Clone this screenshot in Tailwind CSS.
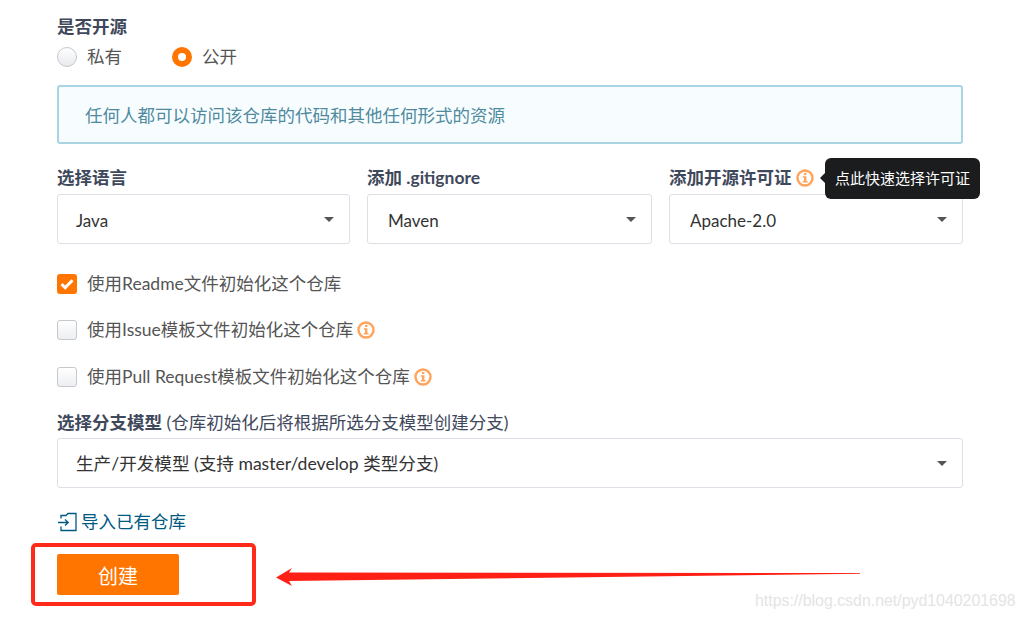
<!DOCTYPE html>
<html lang="en">
<head>
  <meta charset="UTF-8" />
  <title>新建仓库</title>
  <script src="https://cdn.jsdelivr.net/npm/@tailwindcss/browser@4"></script>
</head>
<body class="relative h-[618px] w-[1025px] overflow-hidden bg-white font-['Lato','Noto_Sans_CJK_SC',sans-serif] text-[17.5px] text-[#40485b]">
  <form class="ml-[57px] w-[906px] pt-[15px]">
    <div class="h-[24px] leading-[24px] font-bold">是否开源</div>
    <div class="mt-[6px] flex h-[24px] items-center">
      <span class="h-5 w-5 rounded-full border border-[#c5c8cc] bg-gradient-to-b from-white to-[#e8eaee]"></span>
      <span class="ml-[10px] w-[85px] text-[#555]">私有</span>
      <span class="flex h-5 w-5 items-center justify-center rounded-full bg-[#ff7500]"><span class="h-2 w-2 rounded-full bg-white"></span></span>
      <span class="ml-[10px] text-[#555]">公开</span>
    </div>
    <div class="mt-[16px] flex h-[59px] w-[906px] items-center rounded-[3px] border-2 border-[#a9d5e2] bg-[#f7fdff] pt-[3px] pl-[26px] text-[#4f8a9e]">任何人都可以访问该仓库的代码和其他任何形式的资源</div>

    <div class="mt-[22px] flex gap-[17px]">
      <div class="w-[293px]">
        <div class="h-[24px] leading-[24px] font-bold">选择语言</div>
        <div class="mt-[4px] flex h-[50px] items-center justify-between rounded-[3px] border border-[#dddfe6] pr-[15px] pl-[18px] text-[17px] text-[#333]"><span class="pt-[4px]">Java</span><span class="h-0 w-0 border-x-[5px] border-t-[5px] border-x-transparent border-t-[#555]"></span></div>
      </div>
      <div class="w-[285px]">
        <div class="h-[24px] leading-[24px] font-bold">添加 .gitignore</div>
        <div class="mt-[4px] flex h-[50px] items-center justify-between rounded-[3px] border border-[#dddfe6] pr-[15px] pl-[20px] text-[17px] text-[#333]"><span class="pt-[4px]">Maven</span><span class="h-0 w-0 border-x-[5px] border-t-[5px] border-x-transparent border-t-[#555]"></span></div>
      </div>
      <div class="relative w-[294px]">
        <div class="flex h-[24px] items-center gap-[4px] leading-[24px] font-bold">添加开源许可证
          <svg class="h-[18px] w-[18px]" viewBox="0 0 18 18"><circle cx="9" cy="9" r="7.5" fill="none" stroke="#ffa45c" stroke-width="2.4"/><path d="M6.8 7.2H10.4V12H11.6V13.6H6.8V12H8V8.8H6.8Z" fill="#ffa45c"/><rect x="8" y="3.9" width="2.4" height="2.2" fill="#ffa45c"/></svg>
        </div>
        <div class="mt-[4px] flex h-[50px] items-center justify-between rounded-[3px] border border-[#dddfe6] pr-[15px] pl-[20px] text-[17px] text-[#333]"><span class="pt-[4px]">Apache-2.0</span><span class="h-0 w-0 border-x-[5px] border-t-[5px] border-x-transparent border-t-[#555]"></span></div>
        <div class="absolute top-[-8px] left-[156px] flex h-[41px] w-[155px] items-center justify-center rounded-[6px] bg-[#1b1c1d] text-[15px] font-normal whitespace-nowrap text-white">点此快速选择许可证
          <span class="absolute top-[15px] left-[-5px] h-0 w-0 border-y-[5px] border-r-[5px] border-y-transparent border-r-[#1b1c1d]"></span>
        </div>
      </div>
    </div>

    <div class="mt-[28px] flex h-[24px] items-center">
      <span class="flex h-5 w-5 items-center justify-center rounded-[3px] bg-[#ff7500]">
        <svg class="h-[14px] w-[14px]" viewBox="0 0 14 14"><path d="M1.5 7.2 5.2 10.6 12.5 3.2" fill="none" stroke="#fff" stroke-width="3"/></svg>
      </span>
      <span class="ml-[10px] text-[#555]">使用Readme文件初始化这个仓库</span>
    </div>
    <div class="mt-[22px] flex h-[24px] items-center">
      <span class="h-5 w-5 rounded-[3px] border border-[#c5c8cc] bg-gradient-to-b from-white to-[#eceef1]"></span>
      <span class="ml-[10px] text-[#555]">使用Issue模板文件初始化这个仓库</span>
      <svg class="ml-[4px] h-[18px] w-[18px]" viewBox="0 0 18 18"><circle cx="9" cy="9" r="7.5" fill="none" stroke="#ffa45c" stroke-width="2.4"/><path d="M6.8 7.2H10.4V12H11.6V13.6H6.8V12H8V8.8H6.8Z" fill="#ffa45c"/><rect x="8" y="3.9" width="2.4" height="2.2" fill="#ffa45c"/></svg>
    </div>
    <div class="mt-[23px] flex h-[24px] items-center">
      <span class="h-5 w-5 rounded-[3px] border border-[#c5c8cc] bg-gradient-to-b from-white to-[#eceef1]"></span>
      <span class="ml-[10px] text-[#555]">使用Pull Request模板文件初始化这个仓库</span>
      <svg class="ml-[4px] h-[18px] w-[18px]" viewBox="0 0 18 18"><circle cx="9" cy="9" r="7.5" fill="none" stroke="#ffa45c" stroke-width="2.4"/><path d="M6.8 7.2H10.4V12H11.6V13.6H6.8V12H8V8.8H6.8Z" fill="#ffa45c"/><rect x="8" y="3.9" width="2.4" height="2.2" fill="#ffa45c"/></svg>
    </div>

    <div class="mt-[22px] h-[24px] leading-[24px]"><b>选择分支模型</b> (仓库初始化后将根据所选分支模型创建分支)</div>
    <div class="mt-[3px] flex h-[50px] items-center justify-between rounded-[3px] border border-[#dddfe6] pr-[15px] pl-[18px] text-[17.6px] text-[#333]"><span class="pt-[2px]">生产/开发模型 (支持 master/develop 类型分支)</span><span class="h-0 w-0 border-x-[5px] border-t-[5px] border-x-transparent border-t-[#555]"></span></div>

    <div class="mt-[22px] flex h-[24px] items-center gap-[4px] text-[#005980]">
      <svg class="h-5 w-5" viewBox="0 0 20 20" fill="none" stroke="#005980" stroke-width="1.3"><path d="M4 6.5V3.5H9L11 1.5H19V18.5H4V14.5"/><path d="M1 10.5H11M8 7.5 11.2 10.5 8 13.5"/></svg>
      导入已有仓库
    </div>
    <button type="button" class="mt-[20px] h-[41px] w-[122px] rounded-[2px] bg-[#ff7500] pt-[2px] text-[20px] text-white">创建</button>
  </form>

  <!-- annotation drawn over the screenshot -->
  <div class="absolute top-[543px] left-[31px] h-[63px] w-[225px] rounded-[5px] border-4 border-[#ff2a1a]"></div>
  <svg class="absolute top-[560px] left-[270px]" width="600" height="36" viewBox="0 0 600 36">
    <path d="M6 17.5 22 8 19 12.5 590 13V13.8L19 21 22 26Z" fill="#ff2015"/>
  </svg>
  <div class="absolute top-[590px] left-[755px] font-['Liberation_Sans',sans-serif] text-[15.9px] leading-[22px] text-[#e4e4e4]">https://blog.csdn.net/pyd1040201698</div>
</body>
</html>
